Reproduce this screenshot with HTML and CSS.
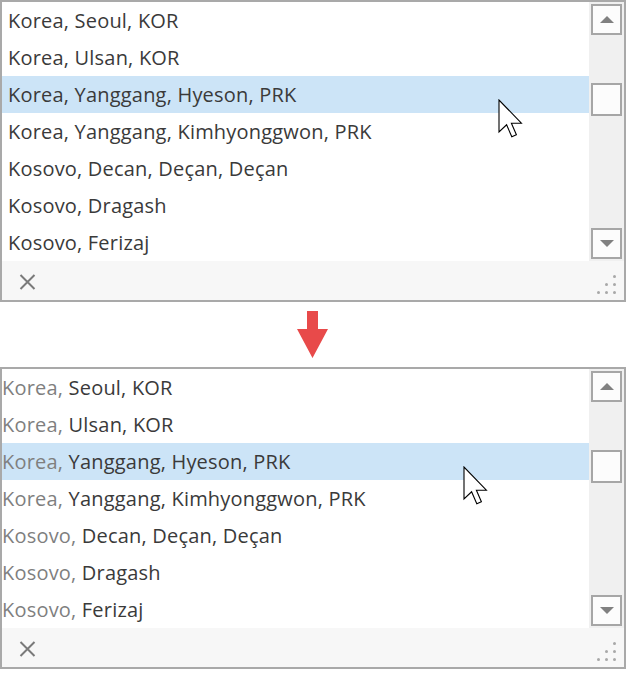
FILE: index.html
```html
<!DOCTYPE html>
<html>
<head>
<meta charset="utf-8">
<link rel="stylesheet" href="styles.css">
</head>
<body>
<div class="page">
  <div class="listbox">
    <div class="main">
      <ul class="items">
        <li class="item">Korea, Seoul, KOR</li>
        <li class="item">Korea, Ulsan, KOR</li>
        <li class="item selected">Korea, Yanggang, Hyeson, PRK
          <svg class="cursor c1" width="26" height="40" viewBox="0 0 13 20"><path d="M0.5 0.5 L0.5 16.5 L4.3 12.9 L6.9 18.9 L9.2 17.9 L6.7 12.1 L11.7 12.1 Z" fill="#fff" stroke="#000" stroke-width="0.55" stroke-linejoin="miter"/></svg>
        </li>
        <li class="item">Korea, Yanggang, Kimhyonggwon, PRK</li>
        <li class="item">Kosovo, Decan, Deçan, Deçan</li>
        <li class="item">Kosovo, Dragash</li>
        <li class="item">Kosovo, Ferizaj</li>
      </ul>
      <div class="scrollbar">
        <div class="sbtn"><span class="tri up"></span></div>
        <div class="track"><div class="thumb"></div></div>
        <div class="sbtn"><span class="tri down"></span></div>
      </div>
    </div>
    <div class="footer">
      <svg class="close" width="17" height="16" viewBox="0 0 17 16"><path d="M1.5 1 L15.5 15 M15.5 1 L1.5 15" stroke="#7a7a7a" stroke-width="2"/></svg>
      <div class="grip">
        <span></span><span></span><span class="d"></span>
        <span></span><span class="d"></span><span class="d"></span>
        <span class="d"></span><span class="d"></span><span class="d"></span>
      </div>
    </div>
  </div>

  <div class="divider">
    <svg width="31" height="47" viewBox="0 0 31 47"><path d="M10 0 H21 V18 H31 L15.5 47 L0 18 H10 Z" fill="#e84a4a"/></svg>
  </div>

  <div class="listbox second">
    <div class="main">
      <ul class="items">
        <li class="item"><span class="pre">Korea,</span> Seoul, KOR</li>
        <li class="item"><span class="pre">Korea,</span> Ulsan, KOR</li>
        <li class="item selected"><span class="pre">Korea,</span> Yanggang, Hyeson, PRK
          <svg class="cursor c2" width="26" height="40" viewBox="0 0 13 20"><path d="M0.5 0.5 L0.5 16.5 L4.3 12.9 L6.9 18.9 L9.2 17.9 L6.7 12.1 L11.7 12.1 Z" fill="#fff" stroke="#000" stroke-width="0.55" stroke-linejoin="miter"/></svg>
        </li>
        <li class="item"><span class="pre">Korea,</span> Yanggang, Kimhyonggwon, PRK</li>
        <li class="item"><span class="pre">Kosovo,</span> Decan, Deçan, Deçan</li>
        <li class="item"><span class="pre">Kosovo,</span> Dragash</li>
        <li class="item"><span class="pre">Kosovo,</span> Ferizaj</li>
      </ul>
      <div class="scrollbar">
        <div class="sbtn"><span class="tri up"></span></div>
        <div class="track"><div class="thumb"></div></div>
        <div class="sbtn"><span class="tri down"></span></div>
      </div>
    </div>
    <div class="footer">
      <svg class="close" width="17" height="16" viewBox="0 0 17 16"><path d="M1.5 1 L15.5 15 M15.5 1 L1.5 15" stroke="#7a7a7a" stroke-width="2"/></svg>
      <div class="grip">
        <span></span><span></span><span class="d"></span>
        <span></span><span class="d"></span><span class="d"></span>
        <span class="d"></span><span class="d"></span><span class="d"></span>
      </div>
    </div>
  </div>
</div>
</body>
</html>
```

FILE: styles.css
```css
html, body {
  margin: 0;
  padding: 0;
  background: #ffffff;
}

.page {
  width: 626px;
  font-family: "Open Sans", "Noto Sans", sans-serif;
}

.listbox {
  width: 626px;
  height: 302px;
  box-sizing: border-box;
  border: 2px solid #a9a9a9;
  display: flex;
  flex-direction: column;
  background: #ffffff;
}

.main {
  display: flex;
  height: 259px;
}

.items {
  list-style: none;
  margin: 0;
  padding: 0;
  flex: 1;
  overflow: hidden;
}

.item {
  position: relative;
  height: 37px;
  line-height: 37px;
  padding-left: 6px;
  font-size: 20px;
  letter-spacing: 0.2px;
  color: #3a3a3a;
  white-space: nowrap;
}

.second .item {
  padding-left: 0;
}

.item.selected {
  background: #cce4f7;
}

.pre {
  color: #7f7f7f;
}

.cursor {
  position: absolute;
  top: 23px;
  display: block;
}

.c1 { left: 496px; }
.c2 { left: 461px; }

.scrollbar {
  width: 35px;
  background: #f0f0f0;
  display: flex;
  flex-direction: column;
  padding: 2px 2px 2px 2px;
  box-sizing: border-box;
}

.sbtn {
  width: 31px;
  height: 31px;
  box-sizing: border-box;
  border: 2px solid #a6a6a6;
  background: #fcfcfc;
  display: flex;
  align-items: center;
  justify-content: center;
}

.track {
  flex: 1;
  padding-top: 48px;
}

.thumb {
  width: 31px;
  height: 33px;
  box-sizing: border-box;
  border: 2px solid #a6a6a6;
  background: #fcfcfc;
}

.tri {
  width: 0;
  height: 0;
  border-left: 7px solid transparent;
  border-right: 7px solid transparent;
}

.tri.up {
  border-bottom: 7px solid #808080;
}

.tri.down {
  border-top: 7px solid #808080;
}

.footer {
  flex: 1;
  background: #f7f7f7;
  display: flex;
  align-items: center;
  justify-content: space-between;
  padding: 0 8px 0 17px;
}

.close {
  display: block;
  margin-top: 2px;
}

.grip {
  display: grid;
  grid-template-columns: repeat(3, 3px);
  grid-template-rows: repeat(3, 3px);
  gap: 5px 5px;
  align-self: flex-end;
  margin-bottom: 6px;
}

.grip span {
  width: 3px;
  height: 3px;
  border-radius: 50%;
}

.grip span.d {
  background: #a8a8a8;
}

.divider {
  height: 65px;
  display: flex;
  justify-content: center;
  align-items: flex-start;
  padding-top: 9px;
  box-sizing: border-box;
}

.divider svg {
  display: block;
  margin-left: -2px;
}
```
